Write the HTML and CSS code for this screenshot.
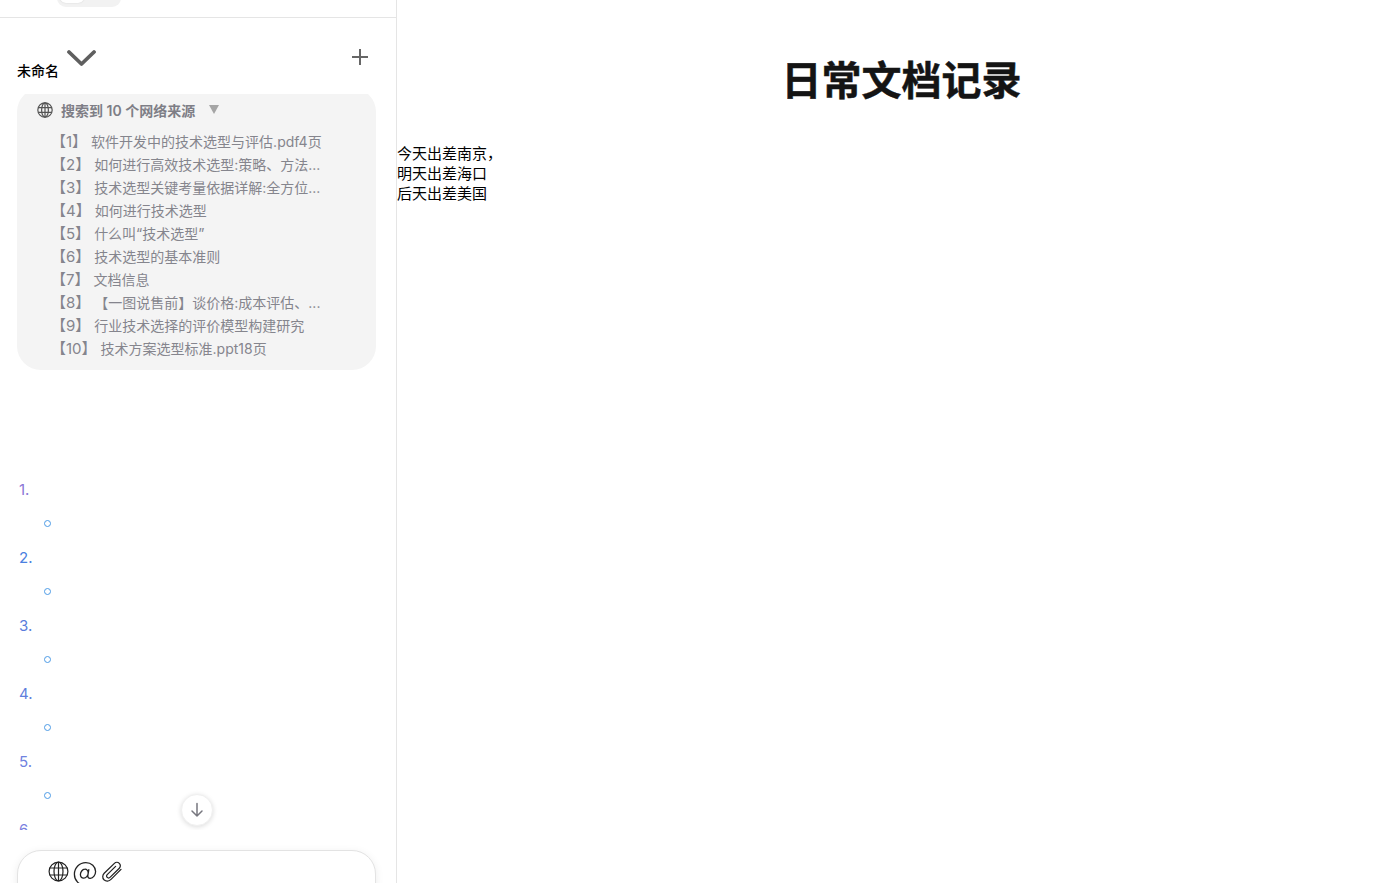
FILE: index.html
```html
<!DOCTYPE html>
<html lang="zh-CN">
<head>
  <meta charset="UTF-8" />
  <title>日常文档记录</title>
  <link rel="stylesheet" href="styles.css">
</head>
<body>
  <div class="container">
    <div class="left-column">
      <div class="top-bar">
        <div class="toggle"><span class="toggle-on"></span></div>
      </div>

      <div class="chat-head">
        <div class="chat-title">
          <span class="chat-name">未命名</span>
          <svg class="chevron" width="30" height="20" viewBox="0 0 30 20"><path d="M3 4 L15.5 16 L28 4" fill="none" stroke="#5f5f5f" stroke-width="3.8" stroke-linecap="round" stroke-linejoin="round"/></svg>
        </div>
        <svg class="plus" width="18" height="18" viewBox="0 0 18 18"><path d="M9 1 V17 M1 9 H17" fill="none" stroke="#666" stroke-width="2"/></svg>
      </div>

      <div class="chat-body">
        <div class="sources">
          <div class="sources-head">
            <svg class="globe" width="16" height="16" viewBox="0 0 16 16"><g fill="none" stroke="#555" stroke-width="1.2"><circle cx="8" cy="8" r="7.2"/><ellipse cx="8" cy="8" rx="3.4" ry="7.2"/><path d="M8 .8 V15.2 M1.2 5.6 H14.8 M1.2 10.4 H14.8"/></g></svg>
            <span class="sources-title">搜索到 10 个网络来源</span>
            <span class="caret"></span>
          </div>
          <div class="source-list">
            <div class="source"><span class="source-no">【1】</span><span>软件开发中的技术选型与评估.pdf4页</span></div>
            <div class="source"><span class="source-no">【2】</span><span>如何进行高效技术选型:策略、方法...</span></div>
            <div class="source"><span class="source-no">【3】</span><span>技术选型关键考量依据详解:全方位...</span></div>
            <div class="source"><span class="source-no">【4】</span><span>如何进行技术选型</span></div>
            <div class="source"><span class="source-no">【5】</span><span>什么叫“技术选型”</span></div>
            <div class="source"><span class="source-no">【6】</span><span>技术选型的基本准则</span></div>
            <div class="source"><span class="source-no">【7】</span><span>文档信息</span></div>
            <div class="source"><span class="source-no">【8】</span><span>【一图说售前】谈价格:成本评估、...</span></div>
            <div class="source"><span class="source-no">【9】</span><span>行业技术选择的评价模型构建研究</span></div>
            <div class="source"><span class="source-no">【10】</span><span>技术方案选型标准.ppt18页</span></div>
          </div>
        </div>

        <div class="steps">
          <div class="step"><div class="step-no c1">1.</div><div class="step-dot"></div></div>
          <div class="step"><div class="step-no c2">2.</div><div class="step-dot"></div></div>
          <div class="step"><div class="step-no c3">3.</div><div class="step-dot"></div></div>
          <div class="step"><div class="step-no c4">4.</div><div class="step-dot"></div></div>
          <div class="step"><div class="step-no c5">5.</div><div class="step-dot"></div></div>
          <div class="step"><div class="step-no c6">6.</div><div class="step-dot"></div></div>
        </div>

        <button class="scroll-btn">
          <svg width="16" height="16" viewBox="0 0 16 16"><path d="M8 1.5 V14 M3 9 L8 14 L13 9" fill="none" stroke="#77777f" stroke-width="1.5" stroke-linecap="round" stroke-linejoin="round"/></svg>
        </button>
      </div>

      <div class="input-wrap">
        <div class="input-box">
          <svg width="21" height="21" viewBox="0 0 21 21"><g fill="none" stroke="#222" stroke-width="1.2"><circle cx="10.5" cy="10.5" r="9.4"/><ellipse cx="10.5" cy="10.5" rx="4.5" ry="9.4"/><path d="M10.5 1 V20 M1.6 7 H19.4 M1.6 14 H19.4"/></g></svg>
          <svg class="at-icon" width="24" height="26" viewBox="0 0 24 26"><path d="M15.8 8.6 L14.9 14.2 C14.6 16.4 15.6 17.6 17.2 17.4 C20.2 17 22.6 14 22.6 10.6 C22.6 5.6 18.4 1.6 12.8 1.6 C6.4 1.6 1.4 6.8 1.4 13.2 C1.4 19.6 6.2 24.2 12.2 24.2 C14.4 24.2 16.4 23.6 18 22.6 M15.2 12 C15.2 9.6 13.6 8 11.8 8.2 C9.4 8.4 7.4 11 7.4 13.6 C7.4 15.8 8.8 17.4 10.8 17.2 C12.8 17 15.2 15 15.2 12" fill="none" stroke="#222" stroke-width="1.3" stroke-linecap="round"/></svg>
          <svg width="22" height="22" viewBox="0 0 22 22"><path d="M20 8.4 L10 18.4 C8 20.4 5 20.6 3 18.8 C1.2 17 1.4 14 3.2 12.2 L13.4 2.4 C14.8 1 16.9 1 18.3 2.4 C19.7 3.8 19.7 5.9 18.3 7.3 L9 16.4 C8.2 17.2 7 17.2 6.2 16.4 C5.4 15.6 5.4 14.4 6.2 13.6 L14.6 5.4" fill="none" stroke="#222" stroke-width="1.25" stroke-linecap="round" stroke-linejoin="round"/></svg>
        </div>
      </div>
    </div>

    <div class="right-column">
      <h1>日常文档记录</h1>
      <div class="doc-text">
        <div>今天出差南京，</div>
        <div>明天出差海口</div>
        <div>后天出差美国</div>
      </div>
    </div>
  </div>
</body>
</html>
```

FILE: styles.css
```css
* {
  box-sizing: border-box;
}

html, body {
  height: 100%;
}

body {
  margin: 0;
  background: #fff;
  color: #000;
  font-family: Inter, "Noto Sans CJK SC", sans-serif;
  font-size: 14px;
  overflow: hidden;
}

.container {
  display: flex;
  height: 883px;
}

.left-column {
  width: 397px;
  flex: none;
  display: flex;
  flex-direction: column;
  border-right: 1px solid #e5e5e5;
  overflow: hidden;
}

.top-bar {
  height: 18px;
  flex: none;
  border-bottom: 1px solid #e5e5e5;
  overflow: hidden;
  padding-left: 57px;
}

.toggle {
  width: 64px;
  height: 24px;
  margin-top: -17px;
  padding: 3px;
  background: #f2f2f2;
  border-radius: 9px;
}

.toggle-on {
  display: block;
  width: 24px;
  height: 17px;
  background: #fff;
  border-radius: 6px;
  box-shadow: 0 0 2px rgba(0,0,0,0.12);
}

.chat-head {
  height: 76px;
  flex: none;
  display: flex;
  justify-content: space-between;
  padding: 30px 27px 0 17px;
}

.chat-title {
  display: flex;
  align-items: flex-start;
}

.chat-name {
  margin-top: 13px;
  font-size: 14px;
  font-weight: 500;
  line-height: 20px;
}

.chevron {
  margin-left: 7px;
}

.chat-body {
  position: relative;
  height: 736px;
  flex: none;
  overflow: hidden;
}

/* the card starts above the scroll area, so its top corners are cut */
.sources {
  width: 359px;
  height: 282px;
  margin-top: -6px;
  margin-left: 17px;
  padding: 13px 0 0 20px;
  background: #f4f4f4;
  border-radius: 24px;
  color: #85858d;
}

.sources-head {
  display: flex;
  align-items: center;
  height: 17px;
}

.sources-title {
  margin-left: 8px;
  font-size: 14px;
  font-weight: 600;
  color: #7e7e86;
}

.caret {
  width: 0;
  height: 0;
  margin-left: 14px;
  border-left: 5px solid transparent;
  border-right: 5px solid transparent;
  border-top: 9px solid #a5a5a5;
}

.source-list {
  margin: 12px 0 0 14px;
}

.source {
  display: flex;
  align-items: baseline;
  height: 23px;
  line-height: 23px;
  font-size: 14px;
  white-space: nowrap;
}

.source-no {
  margin-right: 4px;
  font-size: 15px;
}

.steps {
  margin-top: 108px;
  padding-left: 19px;
}

.step {
  height: 68px;
}

.step-no {
  height: 24px;
  line-height: 24px;
  font-size: 15px;
}

.step-dot {
  width: 7px;
  height: 7px;
  margin: 18px 0 0 25px;
  border: 1px solid #4d9be6;
  border-radius: 50%;
}

.c1 { color: #8a76d6; }
.c2 { color: #4b80e0; }
.c3 { color: #5a7ddc; }
.c4 { color: #5f7edc; }
.c5 { color: #6f82e0; }
.c6 { color: #7a80e0; }

.scroll-btn {
  position: absolute;
  left: 181px;
  top: 700px;
  width: 32px;
  height: 32px;
  padding: 0;
  display: flex;
  align-items: center;
  justify-content: center;
  background: #fff;
  border: 1px solid #f0f0f0;
  border-radius: 50%;
  box-shadow: 0 1px 5px rgba(0,0,0,0.14);
}

.input-wrap {
  flex: 1;
  padding: 20px 20px 0 17px;
}

.input-box {
  display: flex;
  align-items: flex-start;
  gap: 4px;
  height: 60px;
  padding: 10px 0 0 30px;
  background: #fff;
  border: 1px solid #e3e3e3;
  border-radius: 24px;
  box-shadow: 0 2px 8px rgba(0,0,0,0.08);
}

.right-column {
  flex: 1;
}

h1 {
  margin: 56px 0 0;
  padding-left: 26px;
  text-align: center;
  color: #141414;
  font-size: 40px;
  line-height: 50px;
  font-weight: 700;
  -webkit-text-stroke: 0.5px #141414;
}

.doc-text {
  margin-top: 38px;
  line-height: 20px;
  font-size: 15px;
}
```
